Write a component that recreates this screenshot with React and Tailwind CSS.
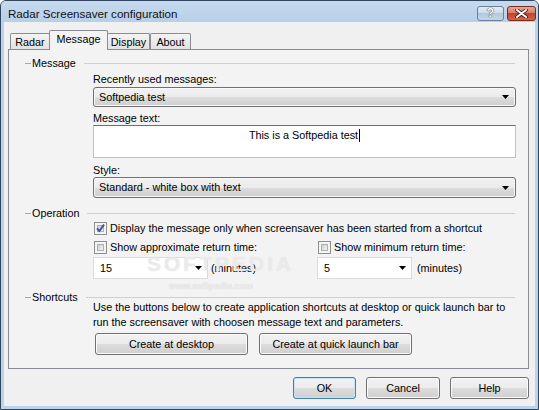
import React from 'react';

const btnFace =
  'bg-[linear-gradient(#f2f2f2_0%,#ebebeb_50%,#dddddd_50%,#cfcfcf_100%)]';

const Arrow = () => (
  <svg width="7" height="4" viewBox="0 0 7 4" className="shrink-0">
    <polygon points="0,0 7,0 3.5,4" fill="#000" />
  </svg>
);

const Combo = ({ text, h = 'h-[20px]' }) => (
  <div
    className={`flex items-center ${h} rounded-[3px] border border-[#707070] ${btnFace} shadow-[inset_0_0_0_1px_#f8f8f8] pl-[5px] pr-[6px]`}
  >
    <span className="flex-1 truncate">{text}</span>
    <Arrow />
  </div>
);

const FlatCombo = ({ text, w }) => (
  <div className={`flex items-center h-[22px] ${w} border border-[#dcdcdc] bg-white pl-[6px] pr-[5px]`}>
    <span className="flex-1">{text}</span>
    <Arrow />
  </div>
);

const Check = ({ checked, label }) => (
  <div className="flex items-center h-[14px]">
    <div className="relative w-[13px] h-[13px] border border-[#8e8f8f] bg-[#f4f4f4] p-[2px] shrink-0">
      <div className="w-full h-full border border-[#b0b0b0] bg-[linear-gradient(135deg,#cbcbcb,#f7f7f7)]" />
      {checked && (
        <svg width="13" height="13" viewBox="0 0 13 13" className="absolute -left-px -top-px">
          <path d="M3 6.3 L5.4 9 L10 2.6" fill="none" stroke="#3d52a0" strokeWidth="1.9" />
        </svg>
      )}
    </div>
    <span className="ml-[3px]">{label}</span>
  </div>
);

const Group = ({ title, mt }) => (
  <div className={`flex items-center h-[14px] pl-[16px] pr-[13px] ${mt}`}>
    <div className="w-[6px] h-px bg-[#a8a8a8]" />
    <span className="ml-[1px] mr-[8px]">{title}</span>
    <div className="flex-1 h-px bg-[#d0d0d0]" />
  </div>
);

const Button = ({ children, w, def }) => (
  <div
    className={`flex items-center justify-center h-[22px] ${w} rounded-[3px] border ${
      def ? 'border-[#3c7fb1] shadow-[inset_0_0_0_1px_#c4e5f6]' : 'border-[#707070] shadow-[inset_0_0_0_1px_#fbfbfb]'
    } ${btnFace}`}
  >
    {children}
  </div>
);

const Tab = ({ label, w, active }) =>
  active ? (
    <div
      className={`${w} h-[20px] -mx-[1px] z-10 flex items-center justify-center border border-b-0 border-[#898c95] bg-[#f3f3f3] rounded-t-[2px] mb-[-1px]`}
    >
      <span className="-mt-[2px]">{label}</span>
    </div>
  ) : (
    <div
      className={`${w} h-[16px] flex items-center justify-center border border-b-0 border-[#898c95] bg-[linear-gradient(#f4f4f4,#e2e2e2)] rounded-t-[2px]`}
    >
      <span className="mt-[1px]">{label}</span>
    </div>
  );

export default function App() {
  return (
    <div className="w-[539px] h-[410px] bg-white font-['Liberation_Sans',Arial,sans-serif] text-[10.8px] text-black leading-[13px]">
      <div className="w-full h-full flex flex-col border border-[#2f4560] rounded-t-[6px] bg-[#bdd3eb]">
        {/* title bar */}
        <div className="h-[21px] flex items-center pl-[7px] pr-[2px] bg-[linear-gradient(#c6daef,#b7cfe8)] rounded-t-[5px]">
          <span className="flex-1 text-[11.6px] text-[#111] mt-[3px]">Radar Screensaver configuration</span>
          <div className="flex gap-[3px] mt-[3px]">
            <div className="w-[27px] h-[15px] rounded-[3px] border border-[#6b7f98] bg-[linear-gradient(#e3ecf6_0%,#c9d9ea_50%,#b3c8df_50%,#c3d6ea_100%)] flex items-center justify-center">
              <span className="text-[12px] font-bold text-white [text-shadow:0_0_1px_#333,0_0_1px_#333] leading-none">?</span>
            </div>
            <div className="w-[29px] h-[15px] rounded-[3px] border border-[#7a2b1c] bg-[linear-gradient(#e8a594_0%,#d67a63_50%,#c2432c_50%,#d2654a_100%)] flex items-center justify-center">
              <svg width="13" height="9" viewBox="0 0 13 9">
                <path d="M2 1 L11 8 M11 1 L2 8" stroke="#3b1a12" strokeWidth="3.6" strokeLinecap="round" />
                <path d="M2 1 L11 8 M11 1 L2 8" stroke="#fff" strokeWidth="2" strokeLinecap="round" />
              </svg>
            </div>
          </div>
        </div>

        {/* client */}
        <div className="flex-1 mx-[3px] mb-[3px] bg-[#f0f0f0] flex flex-col pl-[4px] pr-[6px] pt-[8px]">
          <div className="flex items-end h-[19px] pl-[2px]">
            <Tab label="Radar" w="w-[40px]" />
            <Tab label="Message" w="w-[59px]" active />
            <Tab label="Display" w="w-[43px]" />
            <Tab label="About" w="w-[41px]" />
          </div>

          <div className="relative h-[320px] border border-[#898c95] bg-[#f3f3f3] flex flex-col">
            <Group title="Message" mt="mt-[6px]" />
            <div className="ml-[84px] mr-[12px] flex flex-col">
              <div className="mt-[3px] h-[13px]">Recently used messages:</div>
              <div className="mt-[1px]">
                <Combo text="Softpedia test" />
              </div>
              <div className="mt-[5px] h-[13px]">Message text:</div>
              <div className="h-[33px] bg-white border border-[#a4c9e3] border-t-[#3d7bad] flex justify-center pt-[3px]">
                <span>
                  This is a Softpedia test<span className="inline-block w-px h-[13px] bg-black align-top ml-px" />
                </span>
              </div>
              <div className="mt-[6px] h-[13px]">Style:</div>
              <Combo text="Standard - white box with text" h="h-[21px]" />
            </div>

            <Group title="Operation" mt="mt-[8px]" />
            <div className="ml-[85px] mr-[12px] flex flex-col">
              <div className="mt-[1px]">
                <Check checked label="Display the message only when screensaver has been started from a shortcut" />
              </div>
              <div className="mt-[5px] grid grid-cols-[224px_1fr]">
                <Check label="Show approximate return time:" />
                <Check label="Show minimum return time:" />
              </div>
              <div className="mt-[3px] grid grid-cols-[224px_1fr] -ml-px">
                <div className="flex items-center">
                  <FlatCombo text="15" w="w-[115px]" />
                  <span className="ml-[3px]">(minutes)</span>
                </div>
                <div className="flex items-center">
                  <FlatCombo text="5" w="w-[95px]" />
                  <span className="ml-[5px]">(minutes)</span>
                </div>
              </div>
            </div>

            <Group title="Shortcuts" mt="mt-[11px]" />
            <div className="ml-[84px] mr-[12px] flex flex-col">
              <div className="-mt-[4px] leading-[15px]">
                Use the buttons below to create application shortcuts at desktop or quick launch bar to
                <br />
                run the screensaver with choosen message text and parameters.
              </div>
              <div className="mt-[3px] flex gap-[11px] ml-[2px]">
                <Button w="w-[153px]">Create at desktop</Button>
                <Button w="w-[153px]">Create at quick launch bar</Button>
              </div>
            </div>

            {/* watermark */}
            <div className="absolute left-[138px] top-[203px] pointer-events-none flex flex-col items-start">
              <span className="text-[21px] font-bold tracking-[3px] text-white/50 [text-shadow:0_0_1px_#d4d4d4] leading-none">
                SOFTPEDIA
              </span>
              <span className="text-[9px] font-bold text-white/60 [text-shadow:0_0_1px_#c8c8c8] ml-[22px] mt-[6px]">
                www.softpedia.com
              </span>
            </div>
          </div>

          <div className="mt-[8px] flex justify-end">
            <Button w="w-[63px]" def>OK</Button>
            <div className="w-[10px]" />
            <Button w="w-[74px]">Cancel</Button>
            <div className="w-[10px]" />
            <Button w="w-[79px]">Help</Button>
          </div>
        </div>
      </div>
    </div>
  );
}
